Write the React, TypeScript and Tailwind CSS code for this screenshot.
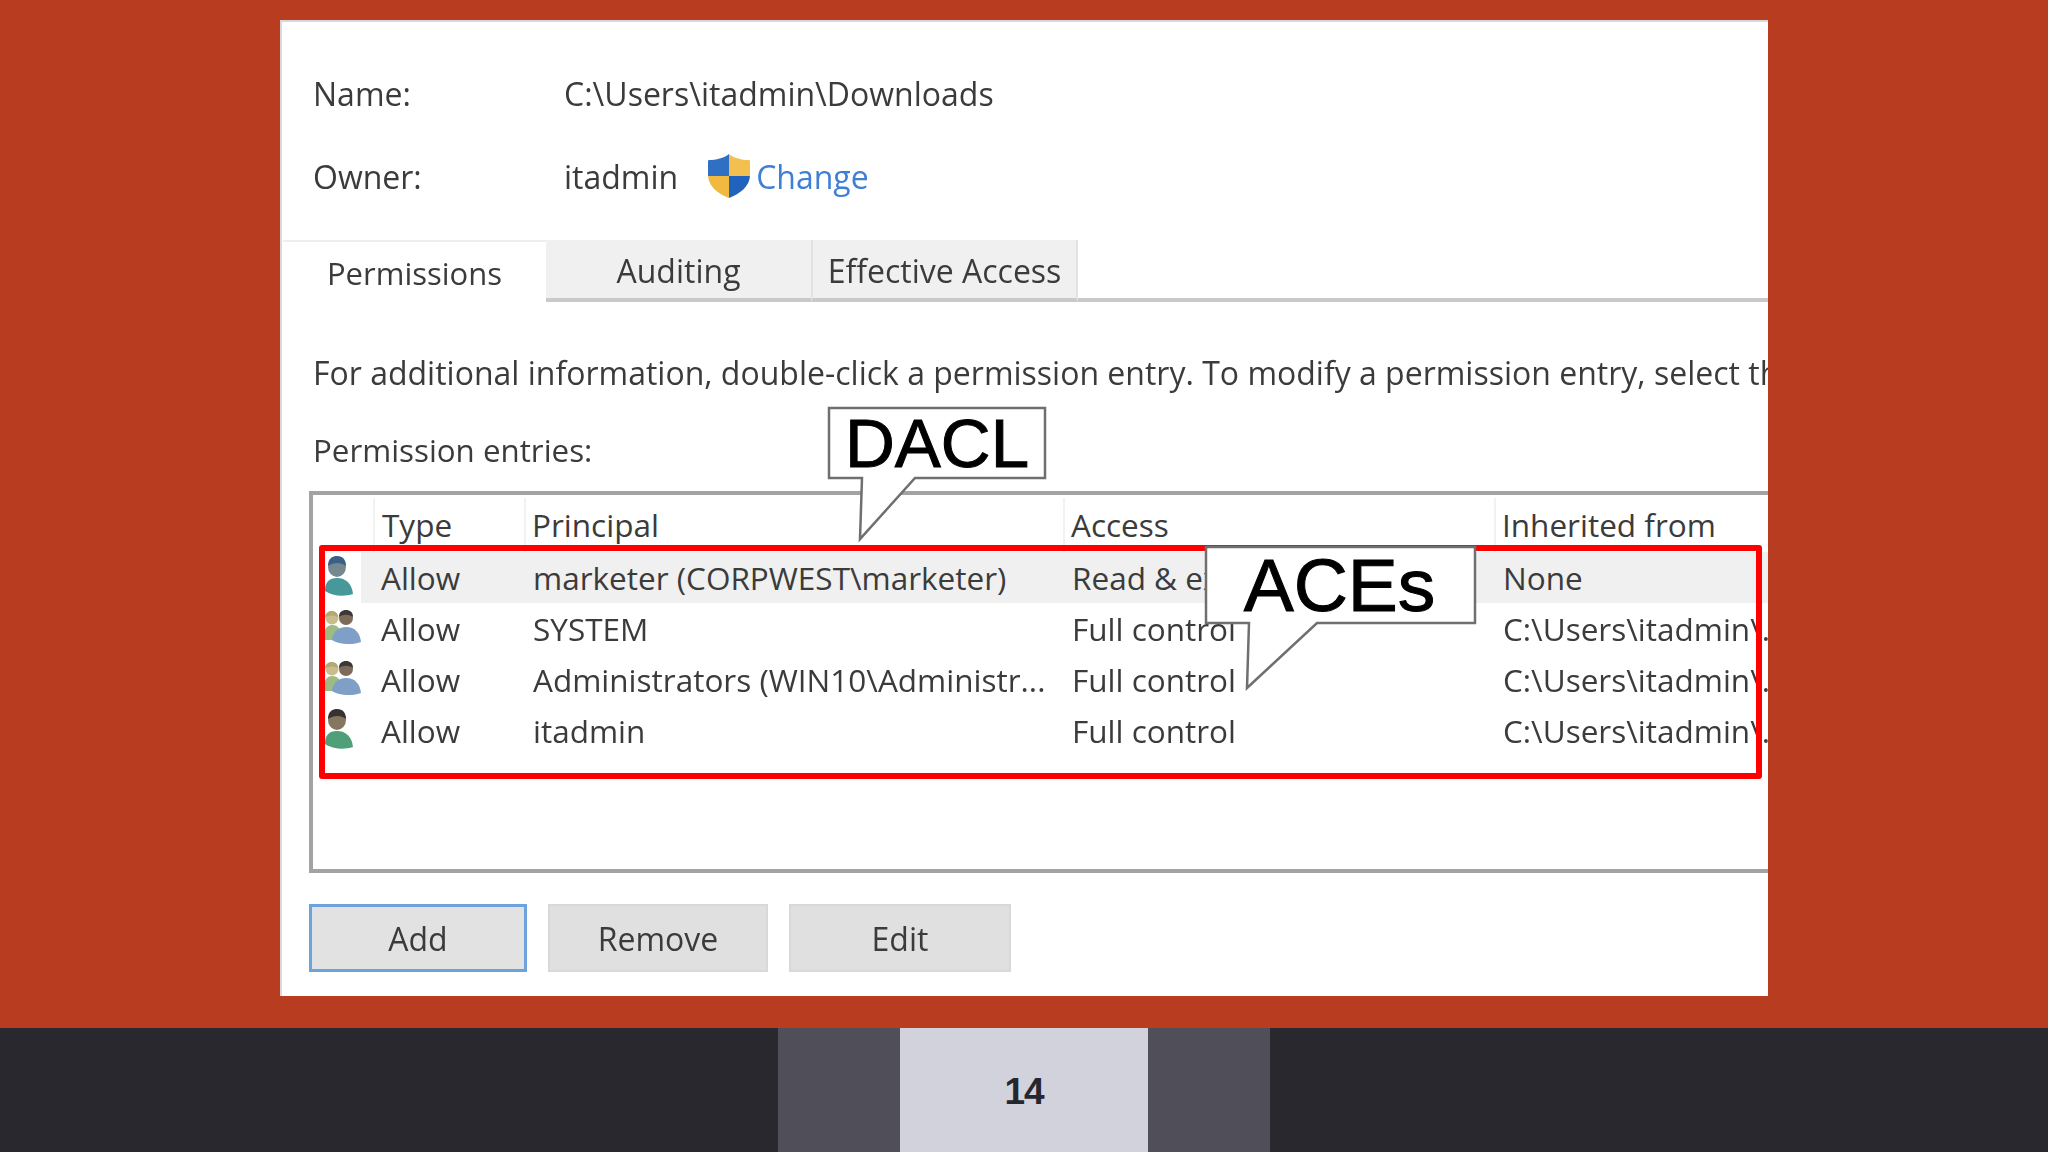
import React from 'react';

const rows = [
  { icon: 'marketer', principal: 'marketer (CORPWEST\\marketer)', access: 'Read & execute', from: 'None', active: true },
  { icon: 'group', principal: 'SYSTEM', access: 'Full control', from: 'C:\\Users\\itadmin\\...' },
  { icon: 'group', principal: 'Administrators (WIN10\\Administr...', access: 'Full control', from: 'C:\\Users\\itadmin\\...' },
  { icon: 'user', principal: 'itadmin', access: 'Full control', from: 'C:\\Users\\itadmin\\...' },
];

function Shield() {
  return (
    <svg width="44" height="44" viewBox="0 0 44 44" className="shrink-0">
      <defs>
        <clipPath id="shield-clip">
          <path d="M22 0C17 4 9 6 2 6C1 6 1 7 1 8V21C1 32 11 40 22 44C33 40 43 32 43 21V8C43 7 43 6 42 6C35 6 27 4 22 0Z" />
        </clipPath>
      </defs>
      <g clipPath="url(#shield-clip)">
        <rect x="0" y="0" width="22" height="22" fill="#2f6fc4" />
        <rect x="22" y="0" width="22" height="22" fill="#f3c04f" />
        <rect x="0" y="22" width="22" height="22" fill="#f0b93f" />
        <rect x="22" y="22" width="22" height="22" fill="#1f63bd" />
      </g>
    </svg>
  );
}

function PersonIcon({ kind }: { kind: string }) {
  if (kind === 'group') {
    return (
      <svg width="38" height="36" viewBox="0 0 38 36" className="shrink-0">
        <circle cx="8" cy="9" r="6.5" fill="#c9bd8e" />
        <path d="M1 8C2 3 5 2 8 2C11 2 14 4 14 8C10 6 6 6 1 8Z" fill="#b3a86f" />
        <path d="M0 28C0 20 3 16 8 16C13 16 17 19 17 27L12 31H1Z" fill="#9dbb82" />
        <circle cx="22" cy="9" r="7" fill="#7d6a58" />
        <path d="M15 8C15 3 18 1 22 1C26 1 29 3 29 8C25 5 19 5 15 8Z" fill="#3c3835" />
        <path d="M8 31C9 22 15 18 22 18C31 18 36 24 37 33C30 36 15 36 8 31Z" fill="#7f9fc8" />
      </svg>
    );
  }
  const hair = kind === 'marketer' ? '#3b5f86' : '#35322f';
  const face = kind === 'marketer' ? '#75878f' : '#857660';
  const body = kind === 'marketer' ? '#46989a' : '#4f9f78';
  return (
    <svg width="30" height="42" viewBox="0 0 30 42" className="shrink-0">
      <ellipse cx="13" cy="12" rx="9" ry="10" fill={face} />
      <path d="M4 11C4 3 9 1 13 1C19 1 22 5 22 11C17 7 10 7 4 11Z" fill={hair} />
      <path d="M1 36C1 27 5 23 13 23C22 23 28 29 29 39C20 42 8 41 1 36Z" fill={body} />
    </svg>
  );
}

function Callout({ label, width, height, tail, className, textClass }: {
  label: string;
  width: number;
  height: number;
  tail: string;
  className: string;
  textClass: string;
}) {
  return (
    <div className={className}>
      <svg width={width} height={height} viewBox={`0 0 ${width} ${height}`} className="absolute left-0 top-0 overflow-visible">
        <path d={tail} fill="#ffffff" stroke="#6f6f6f" strokeWidth="2.5" />
      </svg>
      <span className={textClass}>{label}</span>
    </div>
  );
}

export default function App() {
  return (
    <div className="h-[1152px] w-full flex flex-col bg-[#b83c20] overflow-hidden font-['Open_Sans',sans-serif]">
      <div className="pt-[20px] pl-[280px]">
        {/* Advanced security dialog */}
        <div className="relative w-[1488px] h-[976px] bg-white overflow-hidden border-l-2 border-t-2 border-[#d8d8d8] text-[32px] text-[#3b3b3b]">
          <div className="blur-[0.6px] pl-[31px] pt-[52px]">
            <div className="flex items-center h-[40px]">
              <span className="w-[251px]">Name:</span>
              <span>C:\Users\itadmin\Downloads</span>
            </div>
            <div className="flex items-center h-[44px] mt-[41px]">
              <span className="w-[251px]">Owner:</span>
              <span>itadmin</span>
              <span className="ml-[29px] mr-[5px] flex -mt-[2px]"><Shield /></span>
              <span className="text-[#3f7fd6]">Change</span>
            </div>
          </div>

          {/* Tabs */}
          <div className="blur-[0.5px] flex h-[62px] mt-[41px] ml-[1px]">
            <div className="w-[263px] flex items-center justify-center pt-[3px] text-[31px] border-t-2 border-[#eeeeee]">Permissions</div>
            <div className="w-[265px] flex items-center justify-center pt-[3px] bg-[#f0f0f0] border-b-4 border-[#c9c9c9]">Auditing</div>
            <div className="w-[267px] flex items-center justify-center pt-[3px] bg-[#f0f0f0] border-b-4 border-l-2 border-r-2 border-[#e2e2e2] border-b-[#c9c9c9]">Effective Access</div>
            <div className="flex-1 border-b-4 border-[#c9c9c9]" />
          </div>

          <div className="blur-[0.5px] pl-[31px] pt-[51px] whitespace-nowrap leading-[40px]">
            For additional information, double-click a permission entry. To modify a permission entry, select the entry and click Edit
          </div>
          <div className="blur-[0.5px] pl-[31px] pt-[37px] leading-[40px] text-[31.3px]">Permission entries:</div>

          {/* Permission list */}
          <div className="blur-[0.4px] ml-[27px] mt-[21px] h-[382px] border-l-4 border-t-4 border-b-4 border-[#a3a3a3] bg-white text-[31.5px]">
            <div className="flex h-[57px] pt-[3px] items-center">
              <div className="w-[62px] h-full border-r-2 border-[#f2f2f2]" />
              <div className="w-[151px] h-full flex items-center pl-[7px] border-r-2 border-[#f2f2f2]">Type</div>
              <div className="w-[539px] h-full flex items-center pl-[6px] border-r-2 border-[#f2f2f2]">Principal</div>
              <div className="w-[431px] h-full flex items-center pl-[6px] border-r-2 border-[#f2f2f2]">Access</div>
              <div className="flex-1 h-full flex items-center pl-[6px]">Inherited from</div>
            </div>
            {rows.map((row) => (
              <div key={row.principal} className="flex h-[51px] items-center">
                <div className="w-[48px] pl-[11px] flex shrink-0 -mt-[4px]">
                  <PersonIcon kind={row.icon} />
                </div>
                <div className={`flex flex-1 h-full items-center pr-[13px] ${row.active ? 'bg-[#f0f0f0]' : ''}`}>
                  <div className="w-[14px]" />
                  <div className="w-[152px] pl-[6px]">Allow</div>
                  <div className="w-[539px] pl-[6px] whitespace-nowrap">{row.principal}</div>
                  <div className="w-[431px] pl-[6px] whitespace-nowrap">{row.access}</div>
                  <div className="flex-1 pl-[6px] whitespace-nowrap overflow-hidden">{row.from}</div>
                </div>
              </div>
            ))}
          </div>

          {/* Buttons */}
          <div className="blur-[0.4px] flex gap-[21px] ml-[27px] mt-[31px]">
            <button className="w-[218px] h-[68px] pt-[2px] bg-[#e2e2e2] border-[3px] border-[#6da3dc]">Add</button>
            <button className="w-[220px] h-[68px] pt-[2px] bg-[#e1e0e1] border-2 border-[#d8d8d8]">Remove</button>
            <button className="w-[222px] h-[68px] pt-[2px] bg-[#e1e0e1] border-2 border-[#d8d8d8]">Edit</button>
          </div>

          {/* Annotations */}
          <div className="absolute left-[37px] top-[523px] w-[1443px] h-[234px] border-[6px] border-[#fe0000] rounded-[3px]" />
          <Callout
            label="DACL"
            width={218}
            height={132}
            tail="M1 1H217V71H87L32 132L34 71H1Z"
            className="absolute left-[546px] top-[385px] w-[218px] h-[72px]"
            textClass="absolute inset-0 flex items-center justify-center font-['Liberation_Sans',sans-serif] text-[69px] leading-none text-black blur-[0.4px] [-webkit-text-stroke:1px_black]"
          />
          <Callout
            label="ACEs"
            width={271}
            height={142}
            tail="M1 1H270V77H112L42 142L44 77H1Z"
            className="absolute left-[923px] top-[524px] w-[271px] h-[78px]"
            textClass="absolute inset-0 flex items-center justify-center pr-[2px] font-['Liberation_Sans',sans-serif] text-[75px] leading-none text-black blur-[0.4px] [-webkit-text-stroke:1px_black]"
          />
        </div>
      </div>

      {/* Slide footer */}
      <div className="mt-auto h-[124px] flex bg-[#29282f]">
        <div className="ml-[778px] w-[122px] bg-[#4f4e59]" />
        <div className="w-[248px] bg-[#d1d2dc] flex items-center justify-center pt-[3px] font-['Liberation_Sans',sans-serif] font-bold text-[37px] tracking-[-1px] text-[#26262e]">14</div>
        <div className="w-[122px] bg-[#4f4e59]" />
      </div>
    </div>
  );
}
